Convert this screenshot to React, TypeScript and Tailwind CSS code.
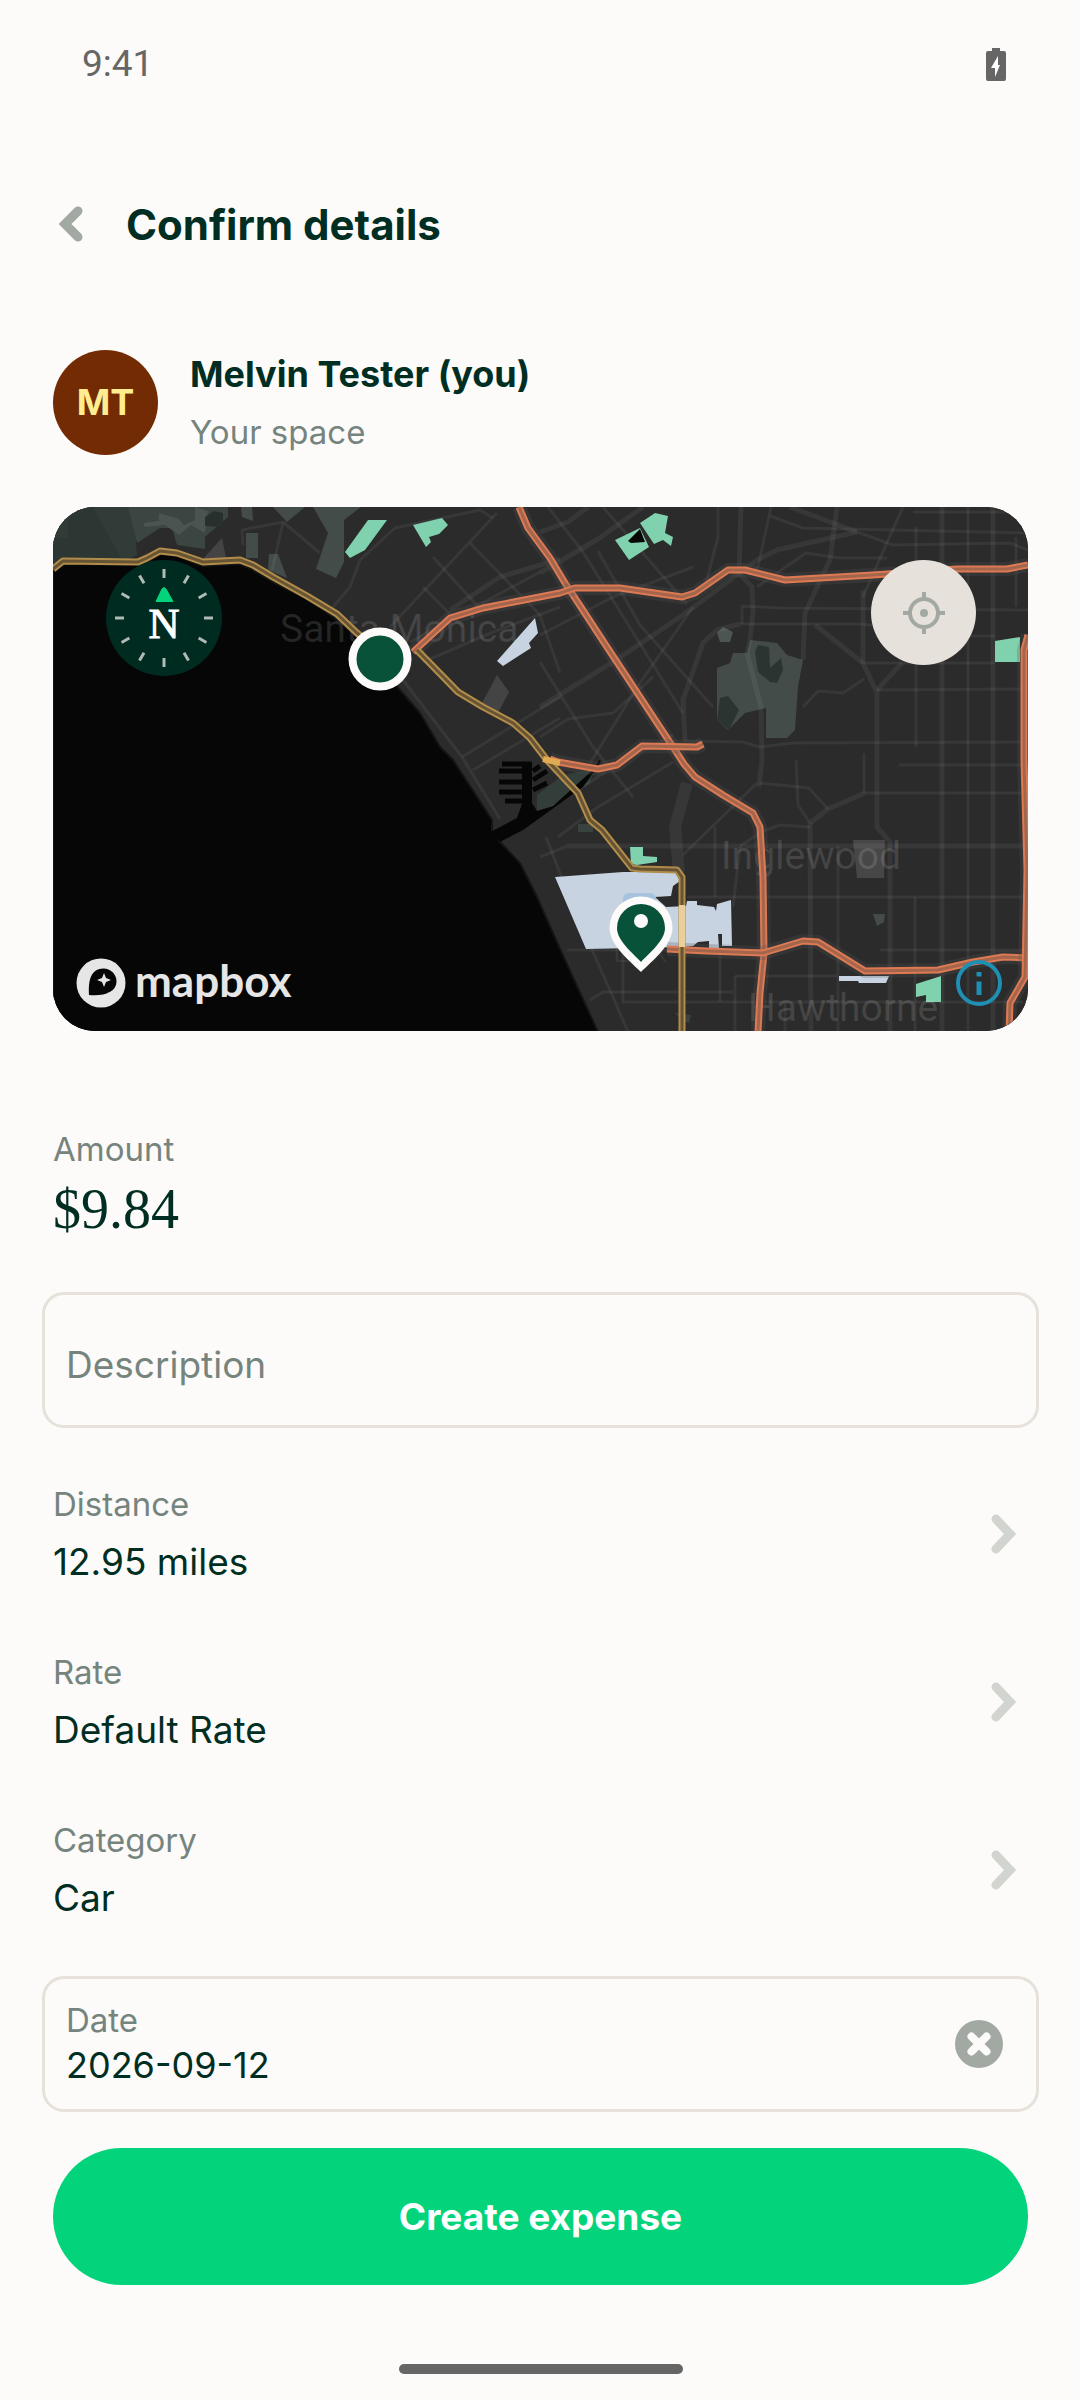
import { useState } from "react";

interface DetailItem {
  label: string;
  value: string;
}

const details: DetailItem[] = [
  { label: "Distance", value: "12.95 miles" },
  { label: "Rate", value: "Default Rate" },
  { label: "Category", value: "Car" },
];

// Points are in map units (975 x 525)
const hills = [
  { fill: "#313b38", points: "0,0 75,0 82,21 84,48 70,55 0,55" },
  { fill: "#2c3734", points: "0,31 15,31 15,0 40,0 70,55 0,55" },
  { fill: "#3b4542", points: "75,0 175,0 175,10 152,30 152,42 124,38 119,21 107,21 84,36" },
  { fill: "#4b5451", points: "90,16 106,14 106,6 126,12 131,18 142,13 142,0 155,4 152,26 138,18 126,28 112,18 92,20" },
  { fill: "#28302e", points: "152,10 161,4 170,6 170,20 152,19" },
];

const parks = [
  { fill: "#434c49", points: "188,0 199,0 200,14 189,10" },
  { fill: "#434c49", points: "193,26 205,26 205,51 193,51" },
  { fill: "#434c49", points: "220,0 252,0 234,15" },
  { fill: "#434c49", points: "260,0 308,0 291,13 291,55 283,71 263,62 275,26" },
  { fill: "#434c49", points: "216,47 225,47 234,71 215,63" },
  { fill: "#434443", points: "169,31 173,51 149,53" },
  { fill: "#434443", points: "444,168 456,185 445,206 429,196" },
  { fill: "#434c49", points: "697,133 724,136 734,148 750,153 745,180 742,223 734,231 713,231 713,201 692,206 675,223 664,213 664,161 677,156 680,146 694,146" },
  { fill: "#2b3431", points: "702,145 705,138 716,140 717,161 728,151 730,163 724,176 717,175 705,165" },
  { fill: "#2b3431", points: "667,191 675,189 686,203 676,223 664,213" },
  { fill: "#4c5552", points: "664,126 670,120 680,125 677,135 667,135" },
  { fill: "#474747", points: "800,333 832,333 831,371 804,371" },
  { fill: "#434c49", points: "820,407 832,407 831,415 824,419" },
  { fill: "#39423f", points: "525,317 540,317 540,325 525,325" },
  { fill: "#39423f", points: "622,506 638,508 636,516 630,514" },
  { fill: "#333e3b", points: "484,288 510,268 541,262 537,276 494,303 484,304" },
];

const greens = [
  "315,13 334,13 312,43 297,51 292,45",
  "360,18 389,11 395,18 386,27 376,30 378,35 373,40",
  "562,33 587,21 596,40 576,53",
  "587,16 602,6 615,9 612,26 620,30 618,39 610,33 601,37",
  "942,134 967,130 967,155 942,155",
  "577,340 590,340 590,349 604,350 604,355 584,358 578,357",
  "863,477 888,469 888,495 873,495 873,488 863,490",
];

const airports = [
  "482,111 485,126 476,136 478,141 450,159 444,154",
  "502,370 570,365 622,365 627,374 620,379 618,389 602,390 613,400 633,399 634,394 644,394 644,398 661,400 663,404 664,397 678,393 679,439 669,439 669,427 665,427 666,441 656,441 656,434 645,435 640,439 630,440 533,442",
  "786,469 836,469 833,476 806,476 805,474 786,474",
];

const wideStreets = [
  "487,200 560,155 630,108 704,53 724,43 804,25",
  "688,0 686,66 699,80 700,105 697,133 694,146 708,200 709,253 706,280",
  "784,0 777,53 752,106 750,153",
  "810,83 810,156 824,186 824,263 824,320 837,335 837,525",
  "889,0 889,525",
  "940,0 940,525",
  "757,316 758,525",
  "762,118 810,156",
  "849,156 824,183",
  "812,286 775,302 757,316",
  "632,233 630,193 650,136 664,123 687,117",
  "487,25 515,15 535,0",
  "397,103 447,70 507,52",
  "487,66 545,32 590,0",
  "737,0 804,25",
  "514,339 970,339",
];

const streets = [
  "717,9 750,21 975,26",
  "804,25 840,38 957,36 975,43",
  "860,5 975,5",
  "787,51 834,51",
  "689,117 689,99 727,101 975,103",
  "687,117 807,117 920,129 942,129",
  "810,156 942,156",
  "824,183 970,182",
  "630,234 690,235 707,240 740,236 970,235",
  "812,286 970,286",
  "634,390 970,390",
  "827,443 970,443",
  "514,443 614,443",
  "682,469 784,469",
  "680,495 970,495",
  "846,258 970,258",
  "915,0 915,525",
  "863,20 863,240",
  "862,390 862,525",
  "785,339 785,525",
  "963,30 963,100",
  "811,246 811,286",
  "732,525 732,495",
  "682,525 682,469",
  "640,100 587,176 537,256",
  "495,0 530,45 630,206",
  "545,44 587,118 660,200",
  "550,0 634,97",
  "487,128 560,90 640,60",
  "487,230 515,212 560,206 600,170",
  "487,155 540,240 580,290",
  "718,0 705,60 697,66",
  "665,0 665,30 652,80",
  "704,80 753,46 787,51",
  "850,0 832,40 810,90",
  "706,276 756,281 775,302",
  "743,253 745,298 757,316",
  "704,276 630,348",
  "687,339 710,324 727,318 757,320",
  "687,340 680,400",
  "662,320 662,390",
  "750,200 765,184 790,186 811,172",
  "487,350 514,339",
  "537,493 550,485 680,485",
  "570,443 570,495 680,495",
  "667,443 667,495",
  "337,120 444,6",
  "417,36 487,108 507,166",
  "380,50 430,105",
  "370,80 410,120",
  "357,135 487,65",
  "370,155 440,125 507,100",
  "409,250 507,190",
  "420,263 507,211",
  "487,308 560,260 620,228",
  "505,330 545,300 620,255",
  "230,16 219,63",
  "190,38 189,23 230,15 267,46",
  "280,100 297,80 307,53 342,21 427,3 440,11",
  "350,173 409,250 447,312",
  "493,330 520,400 560,490 575,525",
];

const freeways = [
  "466,0 475,21 497,51 512,76 520,88 554,140 587,190 620,240 631,257 642,270 670,288 700,306 707,320 710,370 711,446 707,486 705,525",
  "360,145 397,111 430,101 507,86 522,81 567,81 629,90 642,86 675,63 692,63 732,73 820,68 904,62 954,62 975,58",
  "497,252 505,255 545,262 564,258 589,239 644,240 650,237",
  "614,442 654,444 710,446 750,434 765,435 812,464 885,463 920,455 950,450 975,451",
  "975,128 971,143 971,253 974,363 972,470 957,496 956,525",
];

const highways = [
  "0,62 10,54 85,55 94,51 107,44 124,46 150,55 187,53 200,58 220,70 254,89 284,107 304,126 330,148",
  "364,143 405,185 430,200 460,216 477,231 494,253 525,286 537,313 549,323 579,361 587,362 624,363 629,370 629,525",
];

function RouteMap() {
  return (
    <svg
      viewBox="0 0 975 524"
      preserveAspectRatio="xMidYMid slice"
      className="block w-full h-auto"
      role="img"
      aria-label="Route from Santa Monica to LAX"
    >
      <rect width="975" height="525" fill="#2b2b2b" />
      {hills.map((area) => (
        <polygon key={area.points} points={area.points} fill={area.fill} />
      ))}
      {parks.map((area) => (
        <polygon key={area.points} points={area.points} fill={area.fill} />
      ))}

      {/* Streets */}
      <g fill="none" stroke="#fff" strokeOpacity="0.06" strokeLinejoin="round">
        <path d="M634 276 622 320 626 366" strokeWidth="12" />
        {wideStreets.map((points) => (
          <polyline key={points} points={points} strokeWidth="5" />
        ))}
        {streets.map((points) => (
          <polyline key={points} points={points} strokeWidth="3" />
        ))}
      </g>

      {/* Ocean */}
      <path
        d="M0 62 10 57 72 58 94 56 107 47 124 49 150 59 187 57 200 63 220 75 254 92 280 110 304 130 327 156 347 183 367 206 387 240 400 253 439 313 439 325 447 335 467 356 484 390 507 442 545 525H0Z"
        fill="#060606"
        stroke="#151515"
        strokeWidth="2"
      />

      {/* Marina */}
      <path
        d="M437 325 449 319 464 311 469 297 469 255 479 255 479 296 484 304 500 299 541 262 546 253 548 255 530 280 470 323 447 335Z"
        fill="#060606"
      />
      <path
        d="M449 257H478M446 264H470M446 275H469M446 285H469M452 294H469M480 264 487 259M480 273 494 264M480 283 494 276"
        stroke="#060606"
        strokeWidth="5"
        fill="none"
      />

      {greens.map((points) => (
        <polygon key={points} points={points} fill="#80d1ae" />
      ))}
      <polygon points="575,34 587,22 592,35 578,36" fill="#060606" />
      {airports.map((points) => (
        <polygon key={points} points={points} fill="#c7d3e0" />
      ))}
      <rect x="570" y="386" width="33" height="24" rx="6" fill="#a5c3df" />

      {/* Place names */}
      <g fill="#fff" fillOpacity="0.12" fontFamily="Roboto, sans-serif" fontSize="39">
        <text x="227" y="135">Santa Monica</text>
        <text x="668" y="362">Inglewood</text>
        <text x="695" y="514">Hawthorne</text>
        <text x="560" y="455" fontSize="30" fillOpacity="0.06">LAX</text>
      </g>

      {/* Main roads */}
      <g fill="none" strokeLinejoin="round">
        {freeways.map((points) => (
          <g key={points}>
            <polyline points={points} stroke="#555" strokeOpacity="0.25" strokeWidth="14" />
            <polyline points={points} stroke="#dd7a54" strokeWidth="7" />
            <polyline points={points} stroke="#a3664c" strokeWidth="3" />
          </g>
        ))}
        {highways.map((points) => (
          <g key={points}>
            <polyline points={points} stroke="#b28c4a" strokeWidth="7" />
            <polyline points={points} stroke="#665434" strokeWidth="3" />
          </g>
        ))}
        <path d="M629 398V440" stroke="#eccf98" strokeWidth="6" />
        <path d="M490 252 507 256" stroke="#e0ab52" strokeWidth="6" />
      </g>

      {/* Start and end markers */}
      <circle cx="327" cy="152" r="27.5" fill="#085239" stroke="#fcfbf9" strokeWidth="8" />
      <path d="M588 465C578 455 556.500 438 556.500 421A31.500 31.500 0 0 1 619.500 421C619.500 438 598 455 588 465Z" fill="#fcfbf9" />
      <path d="M588 455C580 446 564 434 564 421A24 24 0 0 1 612 421C612 434 596 446 588 455Z" fill="#085239" />
      <circle cx="588" cy="414" r="7" fill="#fcfbf9" />
    </svg>
  );
}

const tickAngles = [0, 30, 60, 90, 120, 150, 180, 210, 240, 270, 300, 330];

function Compass() {
  return (
    <svg viewBox="0 0 116 116" className="size-[116px]" aria-hidden="true">
      <circle cx="58" cy="58" r="58" fill="#002b21" />
      {tickAngles.map((angle) => (
        <path key={angle} d="M58 9V18" stroke="#afbbb4" strokeWidth="3" transform={`rotate(${angle} 58 58)`} />
      ))}
      <path d="M50 41.500 56 29Q58 26 60 29L67 41.500Z" fill="#03d47c" stroke="#03d47c" strokeLinejoin="round" />
      <text x="58" y="78" textAnchor="middle" fontFamily="Liberation Serif, serif" fontSize="43" fill="#fff" stroke="#fff">
        N
      </text>
    </svg>
  );
}

function MapboxLogo() {
  return (
    <>
      <svg viewBox="0 0 50 50" className="size-[50px]" aria-hidden="true">
        <circle cx="25" cy="25" r="24.500" fill="#e6e6e6" />
        <path d="M13 37C12 22 15 10.500 27.500 10.500A13 13 0 0 1 40.500 23.500C40.500 34 28 38.500 13 37Z" fill="#060606" />
        <path d="M28 15 30 20 35 22 30 24 28 29 26 24 21 22 26 20Z" fill="#e6e6e6" />
      </svg>
      <span className="font-['Lato'] text-[44px] leading-[44px] font-bold text-[#e6e6e6]">mapbox</span>
    </>
  );
}

function DetailRow({ label, value }: DetailItem) {
  return (
    <button type="button" className="flex h-[168px] w-full items-center justify-between pr-[11px] text-left">
      <span className="flex flex-col gap-1">
        <span className="text-[33px] leading-[52px] text-[#76847e]">{label}</span>
        <span className="text-[37px] leading-[56px]">{value}</span>
      </span>
      <svg viewBox="0 0 26 40" className="h-10 w-[26px]" fill="none" stroke="#d1d4cf" strokeWidth="9" strokeLinecap="round" aria-hidden="true">
        <path d="M5 5 19 20 5 35" />
      </svg>
    </button>
  );
}

export default function App() {
  const [description, setDescription] = useState("");
  const [date, setDate] = useState("2026-09-12");

  return (
    <div className="min-h-screen bg-[#fcfbf9] pr-[52px] pb-[26px] pl-[53px] font-['Inter',sans-serif] text-[#002e22]">
      {/* Status bar */}
      <div className="flex h-32 items-center justify-between pr-[22px] pl-[29px]">
        <span className="font-['Roboto'] text-[37px] text-[#666]">9:41</span>
        <svg viewBox="0 0 20 33" className="h-[33px] w-5" aria-hidden="true">
          <path d="M6 0H14V3H18Q20 3 20 5V31Q20 33 18 33H2Q0 33 0 31V5Q0 3 2 3H6Z" fill="#666" />
          <path d="M12 8 5 20H9V29L14 17H12Z" fill="#fff" />
        </svg>
      </div>

      {/* Header */}
      <header className="flex h-48 items-center gap-[42px] pl-[5px]">
        <button type="button" aria-label="Back">
          <svg viewBox="0 0 26 40" className="h-10 w-[26px]" fill="none" stroke="#a2a9a3" strokeWidth="9" strokeLinecap="round" aria-hidden="true">
            <path d="M20 7 7 20 20 33" />
          </svg>
        </button>
        <h1 className="text-[42px] font-bold">Confirm details</h1>
      </header>

      <main>
        {/* Owner */}
        <div className="flex items-center gap-8 pt-[26px]">
          <div className="flex size-[105px] items-center justify-center rounded-full bg-[#722b03] text-[36px] font-bold text-[#ffed8f]">
            MT
          </div>
          <div className="flex flex-col gap-1">
            <div className="text-[36px] leading-[56px] font-bold">Melvin Tester (you)</div>
            <div className="text-[33px] leading-[52px] text-[#76847e]">Your space</div>
          </div>
        </div>

        {/* Map */}
        <div className="relative mt-[49px] overflow-hidden rounded-[42px] bg-[#060606]">
          <RouteMap />
          <button type="button" aria-label="Reset north" className="absolute top-[53px] left-[53px]">
            <Compass />
          </button>
          <button
            type="button"
            aria-label="Center map"
            className="absolute top-[53px] right-[52px] flex size-[105px] items-center justify-center rounded-full bg-[#e6e1da]"
          >
            <svg viewBox="0 0 42 42" className="size-[42px]" fill="none" stroke="#a2a9a3" strokeWidth="4" aria-hidden="true">
              <circle cx="21" cy="21" r="14" />
              <circle cx="21" cy="21" r="2" />
              <path d="M21 0V7M21 35V42M0 21H7M35 21H42" />
            </svg>
          </button>
          <a href="#mapbox" className="absolute bottom-[23px] left-[23px] flex items-start gap-[9px]">
            <MapboxLogo />
          </a>
          <button type="button" aria-label="Map info" className="absolute right-[26px] bottom-[25px]">
            <svg viewBox="0 0 46 46" className="size-[46px]" aria-hidden="true">
              <circle cx="23" cy="23" r="21" fill="none" stroke="#1f8fb3" strokeWidth="4" />
              <path d="M20.500 12H25.500V16.500H20.500ZM20.500 21.500H25.500V35H20.500Z" fill="#1f8fb3" />
            </svg>
          </button>
        </div>

        {/* Amount */}
        <div className="pt-[92px]">
          <div className="text-[33px] leading-[52px] text-[#76847e]">Amount</div>
          <div className="font-['Liberation_Serif'] text-[56px] leading-[68px]">$9.84</div>
        </div>

        <div className="-mx-[11px] mt-[49px]">
          <input
            type="text"
            aria-label="Description"
            placeholder="Description"
            value={description}
            onChange={(e) => setDescription(e.target.value)}
            className="h-[136px] w-full rounded-[22px] border-[3px] border-[#e6e1da] px-[21px] pt-2 text-[37px] outline-none placeholder:text-[#76847e]"
          />
        </div>

        <div className="mt-[22px]">
          {details.map((item) => (
            <DetailRow key={item.label} label={item.label} value={item.value} />
          ))}
        </div>

        {/* Date */}
        <div className="-mx-[11px] mt-[22px] flex h-[136px] items-center justify-between rounded-[22px] border-[3px] border-[#e6e1da] pr-[33px] pl-[21px]">
          <div className="flex flex-1 flex-col">
            <label htmlFor="date" className="text-[33px] leading-[42px] text-[#76847e]">
              Date
            </label>
            <input
              id="date"
              type="text"
              value={date}
              onChange={(e) => setDate(e.target.value)}
              className="w-full text-[36px] leading-[48px] outline-none"
            />
          </div>
          <button type="button" aria-label="Clear date" onClick={() => setDate("")}>
            <svg viewBox="0 0 48 48" className="size-12" aria-hidden="true">
              <circle cx="24" cy="24" r="24" fill="#a2a9a3" />
              <path d="M16.500 16.500 31.500 31.500M31.500 16.500 16.500 31.500" stroke="#fcfbf9" strokeWidth="8" strokeLinecap="round" />
            </svg>
          </button>
        </div>

        <button type="submit" className="mt-9 h-[137px] w-full rounded-full bg-[#03d47c] text-[37px] font-bold text-white">
          Create expense
        </button>
      </main>

      {/* Home indicator */}
      <div className="mx-auto mt-[79px] h-[10px] w-[284px] rounded-full bg-[#666]" />
    </div>
  );
}
